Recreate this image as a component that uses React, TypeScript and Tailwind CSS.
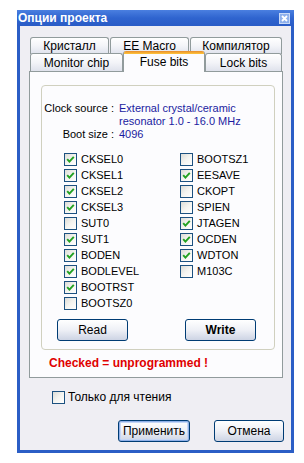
import React from "react";

function Box({ checked }: { checked: boolean }) {
  return (
    <div className="w-[13px] h-[13px] border border-[#1c5180] bg-gradient-to-br from-[#dcdcd7] via-[#f4f4f0] to-[#ffffff] flex items-center justify-center shrink-0">
      {checked && (
        <svg width="9" height="9" viewBox="0 0 9 9">
          <path d="M1.2 4.2 L3.4 6.6 L7.8 1.8" fill="none" stroke="#21a121" strokeWidth="1.9" />
        </svg>
      )}
    </div>
  );
}

function Fuse({ name, checked }: { name: string; checked: boolean }) {
  return (
    <div className="h-[16px] flex items-center gap-[4px]">
      <Box checked={checked} />
      <span className="leading-[13px]">{name}</span>
    </div>
  );
}

const col1: [string, boolean][] = [
  ["CKSEL0", true],
  ["CKSEL1", true],
  ["CKSEL2", true],
  ["CKSEL3", true],
  ["SUT0", false],
  ["SUT1", true],
  ["BODEN", true],
  ["BODLEVEL", true],
  ["BOOTRST", true],
  ["BOOTSZ0", false],
];
const col2: [string, boolean][] = [
  ["BOOTSZ1", false],
  ["EESAVE", true],
  ["CKOPT", false],
  ["SPIEN", false],
  ["JTAGEN", true],
  ["OCDEN", true],
  ["WDTON", true],
  ["M103C", false],
];

const tabInactive =
  "h-full border border-[#919b9c] border-b-0 rounded-t-[3px] bg-gradient-to-b from-[#ffffff] via-[#f3f4f8] to-[#dfe2ec] flex items-center justify-center text-[12px] leading-[14px]";

const btn =
  "h-[22px] border border-[#003c74] rounded-[3px] bg-gradient-to-b from-[#ffffff] via-[#eef0f6] to-[#cdd4e4] flex items-center justify-center text-[12px]";

export default function App() {
  return (
    <div className="w-[304px] h-[463px] bg-white pt-[10px] pl-[17px] font-['Liberation_Sans',Arial,sans-serif] text-[11px] text-black">
      <div className="w-[277px] h-[443px] flex flex-col">
        {/* title bar */}
        <div className="h-[16px] shrink-0 flex items-center justify-between pl-[1px] pr-[4px] bg-gradient-to-b from-[#4a7fe0] via-[#2f64cf] to-[#2a5cc6]">
          <span className="text-white font-bold text-[12px] leading-[14px]">Опции проекта</span>
          <div className="w-[11px] h-[11px] bg-[#8eb0ec] border border-[#c9d9f7] flex items-center justify-center">
            <svg width="7" height="7" viewBox="0 0 7 7">
              <path d="M1 1 L6 6 M6 1 L1 6" stroke="#ffffff" strokeWidth="1.8" />
            </svg>
          </div>
        </div>
        {/* body */}
        <div className="flex-1 flex flex-col border-x-[3px] border-b-[3px] border-[#2b5ec6] bg-[#efeef3] pl-[9px] pr-[8px] pt-[11px]">
          {/* tab row 1 */}
          <div className="h-[17px] flex gap-[1px] pl-[1px]">
            <div className={tabInactive + " w-[79px]"}>Кристалл</div>
            <div className={tabInactive + " w-[79px]"}>EE Macro</div>
            <div className={tabInactive + " w-[92px]"}>Компилятор</div>
          </div>
          {/* tab row 2 */}
          <div className="h-[18px] -mt-[1px] flex items-end pl-[1px] relative z-10">
            <div className={tabInactive + " w-[93px]"}>Monitor chip</div>
            <div className="w-[82px] h-[21px] -mb-[1px] bg-[#fcfcfe] border-x border-[#919b9c] rounded-t-[3px] flex flex-col">
              <div className="h-[3px] rounded-t-[2px] bg-gradient-to-b from-[#e68b2c] to-[#ffc73c]" />
              <div className="flex-1 flex items-start justify-center text-[12px] leading-[14px] pt-[1px]">Fuse bits</div>
            </div>
            <div className={tabInactive + " w-[77px]"}>Lock bits</div>
          </div>
          {/* tab page */}
          <div className="h-[307px] shrink-0 border border-[#919b9c] bg-[#fcfcfe] pt-[13px] pl-[11px] pr-[7px] flex flex-col">
            <div className="h-[265px] border border-[#d0d0bf] rounded-[4px] pt-[16px] flex flex-col">
              <div className="grid grid-cols-[72px_1fr] gap-x-[5px] leading-[13px]">
                <div className="text-right whitespace-nowrap">Clock source :</div>
                <div className="text-[#1b1ba0]">
                  External crystal/ceramic
                  <br />
                  resonator 1.0 - 16.0 MHz
                </div>
                <div className="text-right whitespace-nowrap">Boot size :</div>
                <div className="text-[#1b1ba0]">4096</div>
              </div>
              <div className="mt-[10px] pl-[22px] flex">
                <div className="w-[116px] flex flex-col">
                  {col1.map(([n, c]) => (
                    <Fuse key={n} name={n} checked={c} />
                  ))}
                </div>
                <div className="flex flex-col">
                  {col2.map(([n, c]) => (
                    <Fuse key={n} name={n} checked={c} />
                  ))}
                </div>
              </div>
              <div className="mt-[8px] pl-[15px] flex gap-[57px]">
                <div className={btn + " w-[71px]"}>Read</div>
                <div className={btn + " w-[71px] font-bold"}>Write</div>
              </div>
            </div>
            <div className="mt-[6px] ml-[8px] text-[12px] leading-[14px] font-bold text-[#e00000]">
              Checked = unprogrammed !
            </div>
          </div>
          {/* readonly */}
          <div className="mt-[13px] ml-[23px] flex items-center gap-[3px]">
            <Box checked={false} />
            <span className="text-[12px] leading-[13px]">Только для чтения</span>
          </div>
          {/* buttons */}
          <div className="mt-[16px] flex justify-end gap-[24px] -mr-[1px]">
            <div className={btn + " w-[72px] border-[#1f3f8c] shadow-[inset_0_0_0_1px_#8fb0e8,inset_0_0_0_2px_#c5d6f5]"}>Применить</div>
            <div className={btn + " w-[70px]"}>Отмена</div>
          </div>
        </div>
      </div>
    </div>
  );
}
